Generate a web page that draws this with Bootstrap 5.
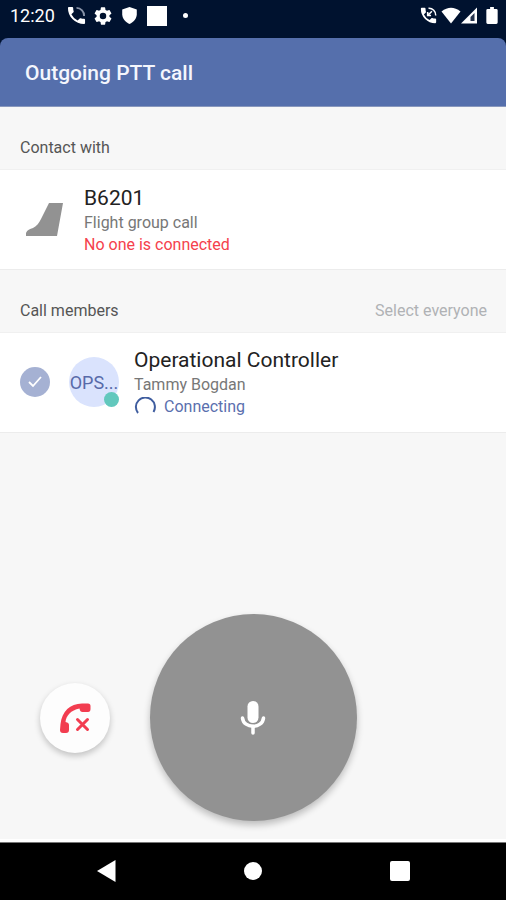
<!DOCTYPE html>
<html lang="en">
<head>
<meta charset="utf-8">
<meta name="viewport" content="width=device-width, initial-scale=1">
<title>Outgoing PTT call</title>
<link href="https://cdn.jsdelivr.net/npm/bootstrap@5.3.0/dist/css/bootstrap.min.css" rel="stylesheet">
<style>
body { font-family: Roboto, "Liberation Sans", sans-serif; font-size: 16px; background: #f7f7f7; color: #555; }
svg { display: block; flex: none; }
.status-bar { background: #00122f; color: #fff; height: 38px; padding: 0 8px 7px 10px; }
.clock { font-size: 18px; line-height: 20px; margin-right: 12px; }
.title-wrap { background: #00122f; }
.title-bar { background: #556fac; border-radius: 8px 8px 0 0; padding: 2px 25px 0; height: 69px; border-bottom: 1px solid #8998bd; }
.title-bar h1 { font-size: 21px; line-height: 24px; font-weight: 500; color: #f4f6fd; }
.section-label { padding: 0 19px 9px 20px; height: 62px; line-height: 24px; }
.section-label h2 { font-size: 16px; line-height: 24px; font-weight: 400; }
.select-all { font-size: 16px; line-height: 24px; color: #b0b2b5; }
.entry { background: #fff; border-top: 1px solid #f0f0f0; border-bottom: 1px solid #ececec; height: 101px; }
.entry-name { font-size: 21px; line-height: 26px; color: #222; }
.entry-info { line-height: 23px; color: #777; }
.entry-alert { line-height: 22px; color: #f5414c; }
.entry-state { line-height: 22px; color: #5a6fae; }
.flight { padding: 1px 24px 0; gap: 19px; }
.member { padding: 0 20px 1px; }
.member .form-check-input { width: 30px; height: 30px; border: 0; border-radius: 50%; }
.member .form-check-input:checked { background-color: #a5b1d3; background-size: 20px; background-image: url("data:image/svg+xml,%3csvg xmlns='http://www.w3.org/2000/svg' viewBox='0 0 20 20'%3e%3cpath d='M4 10l4 4 8-9' fill='none' stroke='%23fff' stroke-width='1.8'/%3e%3c/svg%3e"); }
.avatar { width: 50px; height: 50px; border-radius: 50%; background: #dae3fd; color: #586aa9; font-size: 18px; margin: 0 15px 0 19px; }
.presence { width: 15px; height: 15px; border-radius: 50%; background: #62c8bd; right: 0; bottom: 0; }
.call-controls { padding-bottom: 21px; }
.hang-up, .talk { border: 0; border-radius: 50%; display: flex; align-items: center; justify-content: center; }
.hang-up { width: 70px; height: 70px; background: #fdfdfd; box-shadow: 0 3px 6px rgba(0,0,0,.22); }
.talk { width: 207px; height: 207px; background: #929292; box-shadow: 0 4px 7px rgba(0,0,0,.24); }
.system-nav { background: #000; height: 58px; padding: 0 33px 2px; border-top: 1px solid #777; box-shadow: 0 -3px 0 #fff; }
.system-nav button { border: 0; background: none; }
</style>
</head>
<body>
<div class="d-flex flex-column min-vh-100">
  <div class="status-bar d-flex align-items-center">
    <span class="clock">12:20</span>
    <svg width="19" height="19" viewBox="2 2 20 20" fill="#fff"><path d="M20 15.500c-1.200 0-2.500-.2-3.600-.6-.3-.1-.7 0-1 .2l-2.200 2.200a15 15 0 0 1-6.600-6.600l2.200-2.200c.3-.3.400-.7.200-1A11 11 0 0 1 8.500 4c0-.6-.4-1-1-1H4c-.6 0-1 .4-1 1a17 17 0 0 0 17 17c.6 0 1-.4 1-1v-3.500c0-.6-.4-1-1-1z"/><path d="M12 4a8 8 0 0 1 8 8.500" fill="none" stroke="#8994a8" stroke-width="2"/></svg>
    <svg class="ms-2" width="18" height="18" viewBox="2 2 20 20" fill="#fff"><path d="M19.140 12.940a7 7 0 0 0 0-1.880l2.030-1.580a.5.5 0 0 0 .12-.61l-1.920-3.320a.5.5 0 0 0-.59-.22l-2.390.96a7 7 0 0 0-1.620-.94l-.36-2.540A.5.5 0 0 0 13.920 2.400h-3.840a.5.5 0 0 0-.47.41l-.36 2.540a7 7 0 0 0-1.620.94l-2.390-.96a.5.5 0 0 0-.59.22L2.740 8.870a.5.5 0 0 0 .12.61l2.030 1.580a7 7 0 0 0 0 1.880l-2.030 1.580a.5.5 0 0 0-.12.610l1.920 3.320c.12.220.370.290.590.220l2.390-.96c.5.380 1.030.7 1.620.94l.36 2.540c.05.240.240.410.480.410h3.840c.240 0 .440-.170.470-.410l.36-2.540a7 7 0 0 0 1.620-.94l2.390.96c.220.080.470 0 .590-.220l1.920-3.320a.5.5 0 0 0-.12-.610zM12 15.600a3.600 3.600 0 1 1 0-7.200 3.600 3.600 0 0 1 0 7.200z"/></svg>
    <svg class="ms-2" width="19" height="17" viewBox="1 2 22 21" fill="#fff"><path d="M12 2 3 5v6c0 5 4 10 9 12 5-2 9-7 9-12V5z"/></svg>
    <svg class="ms-2" width="20" height="20" viewBox="0 0 20 20" fill="#fff"><path d="M0 0h20v20H0z"/></svg>
    <svg class="ms-3" width="5" height="5" viewBox="0 0 6 6" fill="#fff"><circle cx="3" cy="3" r="3"/></svg>
    <svg class="ms-auto" width="17" height="17" viewBox="2 2 20 20" fill="#fff"><path d="M20 15.500c-1.200 0-2.500-.2-3.600-.6-.3-.1-.7 0-1 .2l-2.200 2.200a15 15 0 0 1-6.600-6.600l2.200-2.200c.3-.3.400-.7.200-1A11 11 0 0 1 8.500 4c0-.6-.4-1-1-1H4c-.6 0-1 .4-1 1a17 17 0 0 0 17 17c.6 0 1-.4 1-1v-3.500c0-.6-.4-1-1-1z"/><path d="M12 3.500a8 8 0 0 1 8.500 8.500M11 12l5-5m-5 1v4h4" fill="none" stroke="#fff" stroke-width="1.800"/></svg>
    <svg class="ms-1" width="20" height="17" viewBox="0 0 20 17" fill="#fff"><path d="M10 16.500.5 4.500Q10-3 19.500 4.500z"/></svg>
    <svg width="17" height="17" viewBox="0 0 17 17"><path d="M0 16.500 16 .5v16z" fill="#fff"/><path d="M9.500 14V10l4-4v8z" fill="#26344e"/></svg>
    <svg class="ms-2" width="12" height="17" viewBox="0 0 12 18" fill="#fff"><path d="M4 0h4v2h2.500Q12 2 12 3.500v13Q12 18 10.500 18h-9Q0 18 0 16.500v-13Q0 2 1.500 2H4z"/></svg>
  </div>

  <header class="title-wrap">
    <div class="title-bar d-flex align-items-center"><h1 class="m-0">Outgoing PTT call</h1></div>
  </header>

  <main class="flex-grow-1 d-flex flex-column">
    <section>
      <div class="section-label d-flex align-items-end"><h2 class="m-0">Contact with</h2></div>
      <div class="entry flight d-flex align-items-center">
        <svg width="41" height="36" viewBox="0 0 41 36" fill="#929292"><path d="M25 1h14l-6 33H2v-3c1-3 4-4 7-5 4-2 6-5 8-9z"/></svg>
        <div>
          <div class="entry-name">B6201</div>
          <div class="entry-info">Flight group call</div>
          <div class="entry-alert">No one is connected</div>
        </div>
      </div>
    </section>

    <section>
      <div class="section-label d-flex align-items-end justify-content-between">
        <h2 class="m-0">Call members</h2>
        <button type="button" class="select-all btn border-0 p-0">Select everyone</button>
      </div>
      <div class="entry member d-flex align-items-center">
        <input class="form-check-input m-0 flex-shrink-0" type="checkbox" id="member-ops" aria-label="Operational Controller" checked>
        <label class="d-flex align-items-center" for="member-ops">
          <span class="avatar position-relative d-flex align-items-center justify-content-center flex-shrink-0">OPS...<span class="presence position-absolute"></span></span>
          <span class="d-block">
            <span class="entry-name d-block">Operational Controller</span>
            <span class="entry-info d-block">Tammy Bogdan</span>
            <span class="entry-state d-flex align-items-center gap-2"><svg width="22" height="20" viewBox="0 0 22 20"><path d="M4 16a9.500 9.500 0 1 1 15.500-1" fill="none" stroke="#3f5d9f" stroke-width="2"/></svg>Connecting</span>
          </span>
        </label>
      </div>
    </section>

    <div class="call-controls row g-0 align-items-center mt-auto">
      <div class="col d-flex justify-content-center">
        <button type="button" class="hang-up p-0" aria-label="Hang up">
          <svg width="34" height="34" viewBox="0 0 34 34"><path d="M2.500 23C4 10 12 3 24 2.500h6q2.500 0 2.500 2.500v3q0 3-2.500 3h-5.500q-2.500 0-3-3.500C13 9 8 15 7.500 21q3.500.5 3.500 3v5q0 3-3 3H5q-3 0-3-3z" fill="#f23d50"/><path d="m19.500 18.500 10 10m0-10-10 10" stroke="#f23d50" stroke-width="3" stroke-linecap="round"/></svg>
        </button>
      </div>
      <div class="col-auto">
        <button type="button" class="talk p-0" aria-label="Push to talk">
          <svg width="26" height="34" viewBox="0 0 26 34"><rect x="7.500" y="0" width="11" height="22" rx="5.500" fill="#fff"/><path d="M2.500 17c1 11 20 11 21 0M13 25v7" fill="none" stroke="#fff" stroke-width="3.500" stroke-linecap="round"/></svg>
        </button>
      </div>
      <div class="col"></div>
    </div>
  </main>

  <nav class="system-nav row g-0 align-items-center" aria-label="System">
    <button type="button" class="col d-flex justify-content-center p-0" aria-label="Back"><svg width="19" height="22" viewBox="0 0 19 22" fill="#fff"><path d="M18.500 0v22L0 11z"/></svg></button>
    <button type="button" class="col d-flex justify-content-center p-0" aria-label="Home"><svg width="18" height="18" viewBox="0 0 18 18" fill="#fff"><circle cx="9" cy="9" r="9"/></svg></button>
    <button type="button" class="col d-flex justify-content-center p-0" aria-label="Recent apps"><svg width="20" height="20" viewBox="0 0 20 20" fill="#fff"><rect width="20" height="20" rx="2"/></svg></button>
  </nav>
</div>
<script src="https://cdn.jsdelivr.net/npm/bootstrap@5.3.0/dist/js/bootstrap.bundle.min.js"></script>
</body>
</html>
